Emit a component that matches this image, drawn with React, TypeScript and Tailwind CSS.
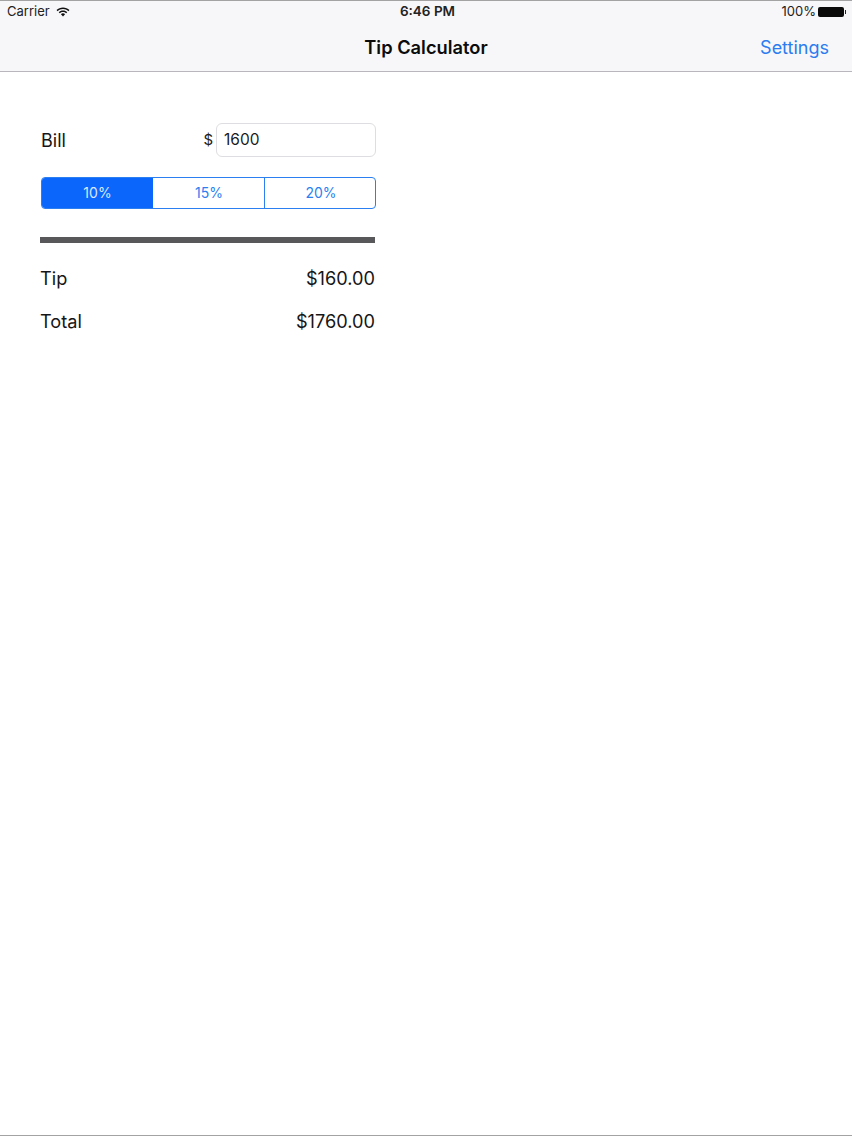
export default function App() {
  return (
    <div className="w-[852px] h-[1136px] flex flex-col bg-white border-y border-[#a3a3a3] font-['Inter',sans-serif] text-[#111]">
      <header className="h-[71px] shrink-0 bg-[#f7f6f9] border-b border-[#b9b7bd] flex flex-col">
        <div className="h-[21px] grid grid-cols-[1fr_auto_1fr] items-center pl-[7px] pr-[6px] text-[13px] leading-[21px]">
          <div className="flex items-center gap-[6px] text-[#222]">
            <span>Carrier</span>
            <svg width="14" height="10" viewBox="0 0 15 11" fill="#111">
              <path d="M7.5 0.5C4.7 0.5 2.2 1.6 0.4 3.4L1.6 4.7C3.1 3.2 5.2 2.3 7.5 2.3S11.9 3.2 13.4 4.7L14.6 3.4C12.8 1.6 10.3 0.5 7.5 0.5Z" />
              <path d="M7.5 3.8C5.6 3.8 4 4.5 2.8 5.7L4 7C4.9 6.1 6.1 5.6 7.5 5.6S10.1 6.1 11 7L12.2 5.7C11 4.5 9.4 3.8 7.5 3.8Z" />
              <path d="M7.5 7C6.6 7 5.8 7.3 5.2 7.9L7.5 10.4L9.8 7.9C9.2 7.3 8.4 7 7.5 7Z" />
            </svg>
          </div>
          <div className="text-center font-semibold text-[13.5px] text-[#222] ml-[2px]">6:46 PM</div>
          <div className="flex items-center justify-end gap-[2px] text-[#222]">
            <span>100%</span>
            <div className="flex items-center">
              <div className="w-[26px] h-[10px] bg-[#0a0a0a] rounded-[2px]" />
              <div className="w-[1.5px] h-[4px] bg-[#222] ml-[0.5px]" />
            </div>
          </div>
        </div>
        <div className="flex-1 grid grid-cols-[1fr_auto_1fr] items-center pt-[2px]">
          <div />
          <div className="text-center font-semibold text-[18.3px] text-[#0b0b0b] whitespace-nowrap">Tip Calculator</div>
          <div className="text-right text-[18px] text-[#2b7cf0] pr-[23px]">Settings</div>
        </div>
      </header>
      <main className="w-[336px] ml-[40px] mt-[51px] flex flex-col">
        <div className="flex items-center h-[34px]">
          <span className="pl-[1px] text-[18px] text-[#151515] flex-1">Bill</span>
          <span className="text-[15px] mr-[3px] text-[#222]">$</span>
          <div className="w-[160px] h-[34px] flex items-center border border-[#dedee2] rounded-[6px] pl-[7px] text-[15.5px] text-[#1a1a1a]">1600</div>
        </div>
        <div className="ml-[1px] mt-[20px] h-[32px] grid grid-cols-[111px_112px_1fr] border border-[#2b7ff0] rounded-[4px] overflow-hidden text-[14px] leading-[30px] text-[#2b7ff0]">
          <div className="bg-[#0b66fb] text-[#dbe8ff] text-center">10%</div>
          <div className="border-r border-[#2b7ff0] text-center pl-[1px]">15%</div>
          <div className="text-center pl-[2px]">20%</div>
        </div>
        <div className="w-[335px] h-[6px] mt-[28px] bg-[#58585a]" />
        <div className="w-[335px] mt-[23px] flex justify-between text-[18.2px] leading-[24px] text-[#161616]">
          <span>Tip</span>
          <span>$160.00</span>
        </div>
        <div className="w-[335px] mt-[19px] flex justify-between text-[18.2px] leading-[24px] text-[#161616]">
          <span>Total</span>
          <span>$1760.00</span>
        </div>
      </main>
    </div>
  );
}
